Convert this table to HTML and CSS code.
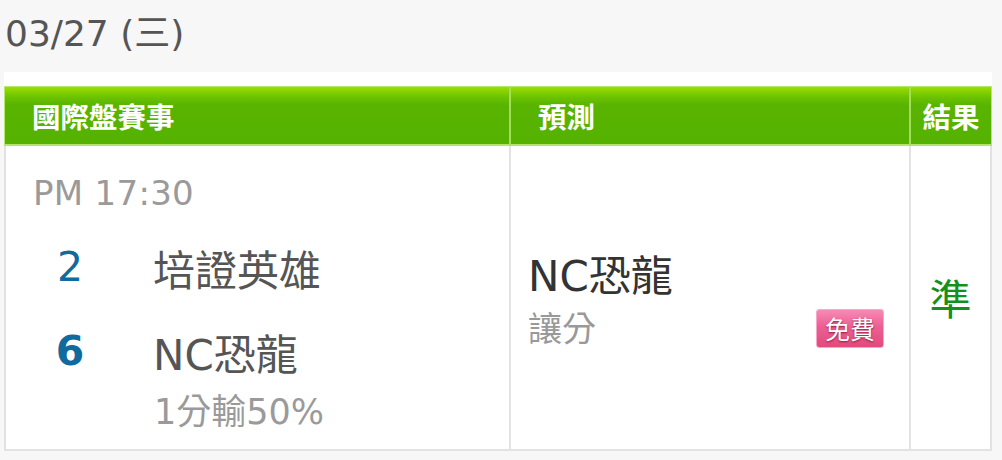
FILE: index.html
```html
<!DOCTYPE html>
<html lang="zh-Hant">
<head>
<meta charset="utf-8">
<title>03/27 (三)</title>
<link rel="stylesheet" href="styles.css">
</head>
<body>
<div class="date">03/27 (三)</div>
<div class="wrap">
  <div class="table">
    <div class="th th-game">國際盤賽事</div>
    <div class="th th-pred">預測</div>
    <div class="th th-res">結果</div>

    <div class="td td-game">
      <div class="time">PM 17:30</div>
      <div class="team team-first">
        <span class="score">2</span>
        <span class="name">培證英雄</span>
      </div>
      <div class="team">
        <span class="score win">6</span>
        <span class="name">NC恐龍</span>
      </div>
      <div class="handicap">1分輸50%</div>
    </div>
    <div class="td td-pred">
      <div class="pick">NC恐龍</div>
      <div class="pick-row">
        <span class="type">讓分</span>
        <span class="badge">免費</span>
      </div>
    </div>
    <div class="td td-res">
      <span class="result">準</span>
    </div>
  </div>
</div>
</body>
</html>
```

FILE: styles.css
```css
html, body {
  margin: 0;
  padding: 0;
}
body {
  background: #f7f7f7;
  font-family: "DejaVu Sans", "Noto Sans CJK TC", sans-serif;
  width: 1002px;
  height: 460px;
  overflow: hidden;
}
.date {
  height: 72px;
  box-sizing: border-box;
  padding: 12px 0 0 5px;
  font-size: 36px;
  line-height: 44px;
  color: #555;
}
.wrap {
  margin-left: 4px;
  width: 988px;
  background: #fff;
  padding-top: 14px;
}
.table {
  display: grid;
  grid-template-columns: 507px 400px 1fr;
  grid-template-rows: 60px 305px;
}
.th {
  background: linear-gradient(#9bdd00 0%, #6cc200 18%, #58b400 32%, #55b200 100%);
  color: #fff;
  font-weight: bold;
  font-size: 28.5px;
  display: flex;
  align-items: center;
  border-bottom: 2px solid #b2e36c;
  border-right: 2px solid #a6dc5e;
  box-sizing: border-box;
  border-top: 1px solid #b6e86a;
}
.th-game {
  padding-left: 27px;
  border-left: 1px solid #b6e86a;
}
.th-pred {
  padding-left: 27px;
}
.th-res {
  justify-content: center;
  border-right: 1px solid #b6e86a;
}
.td {
  border-bottom: 2px solid #e2e2e2;
  border-right: 2px solid #e2e2e2;
  box-sizing: border-box;
}
.td-game {
  border-left: 2px solid #e2e2e2;
  padding: 27px 0 0 27px;
}
.time {
  font-size: 34px;
  line-height: 40px;
  color: #9a9a9a;
  letter-spacing: 0.3px;
}
.team {
  display: flex;
  align-items: center;
  height: 84px;
}
.team-first {
  margin-top: 12px;
}
.score {
  width: 74px;
  text-align: center;
  font-size: 41px;
  color: #0f6a9e;
}
.score.win {
  font-weight: bold;
}
.name {
  margin-left: 46px;
  font-size: 42px;
  color: #555;
}
.handicap {
  margin: -1px 0 0 121px;
  font-size: 35px;
  line-height: 40px;
  color: #9a9a9a;
}
.td-pred {
  display: flex;
  flex-direction: column;
  justify-content: center;
  padding: 6px 25px 0 17px;
}
.pick {
  font-size: 42px;
  line-height: 48px;
  color: #333;
}
.pick-row {
  display: flex;
  justify-content: space-between;
  align-items: center;
  margin-top: 8px;
}
.type {
  font-size: 34px;
  line-height: 40px;
  color: #999;
}
.badge {
  width: 68px;
  height: 39px;
  box-sizing: border-box;
  border-radius: 3px;
  border: 1px solid #f7a8c8;
  background: linear-gradient(#f68ab6 0%, #ec5f93 45%, #e24a7c 100%);
  color: #fff;
  font-size: 25px;
  display: flex;
  align-items: center;
  justify-content: center;
  text-shadow: 0 1px 2px #8a1a3c;
  margin-top: -1px;
}
.td-res {
  display: flex;
  align-items: center;
  justify-content: center;
  padding-bottom: 2px;
}
.result {
  font-size: 42px;
  color: #14901e;
}
```
